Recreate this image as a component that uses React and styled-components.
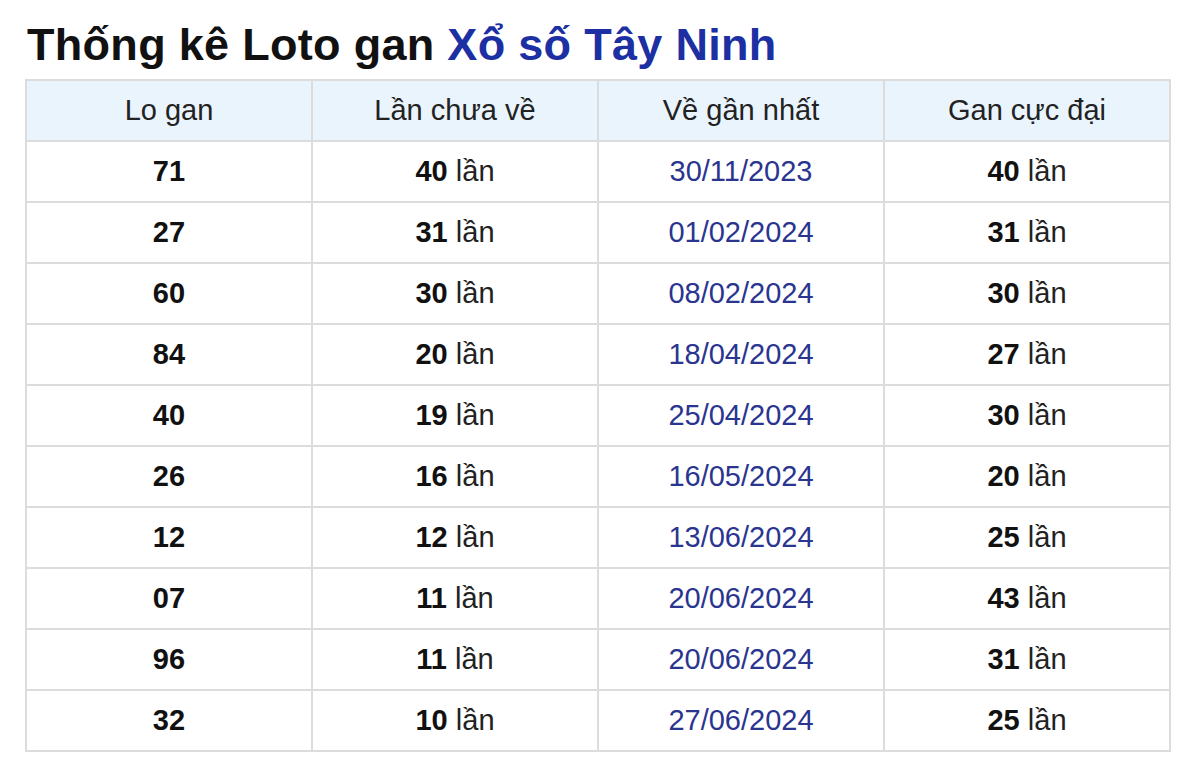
import React from "react";
import styled, { createGlobalStyle } from "styled-components";

const Global = createGlobalStyle`
  body { margin: 0; background: #fff; font-family: "Liberation Sans", Arial, sans-serif; }
`;
const Page = styled.div`padding: 18px 29px 0 25px;`;
const Title = styled.h1`
  margin: 0 0 8px 2px; font-size: 45px; font-weight: bold; color: #111; line-height: 53px;
  letter-spacing: 0.3px;
  span { color: #1c2fa3; }
`;
const Table = styled.table`
  width: 1146px; border-collapse: collapse; table-layout: fixed;
`;
const Th = styled.th`
  background: #eaf4fd; font-weight: normal; font-size: 29px; color: #222;
  height: 59px; padding: 0; border: 2px solid #dcdcdc; text-align: center;
`;
const Td = styled.td`
  height: 59px; padding: 0; border: 2px solid #dcdcdc; text-align: center; font-size: 29px;
  color: ${p => (p.$date ? "#2a3590" : "#222")};
  b { font-weight: bold; color: #111; }
`;

const rows = [
  ["71","40","30/11/2023","40"],["27","31","01/02/2024","31"],["60","30","08/02/2024","30"],
  ["84","20","18/04/2024","27"],["40","19","25/04/2024","30"],["26","16","16/05/2024","20"],
  ["12","12","13/06/2024","25"],["07","11","20/06/2024","43"],["96","11","20/06/2024","31"],
  ["32","10","27/06/2024","25"],
];

export default function App() {
  return (
    <Page>
      <Global />
      <Title>Thống kê Loto gan <span>Xổ số Tây Ninh</span></Title>
      <Table>
        <thead><tr><Th>Lo gan</Th><Th>Lần chưa về</Th><Th>Về gần nhất</Th><Th>Gan cực đại</Th></tr></thead>
        <tbody>
          {rows.map((r, i) => (
            <tr key={i}>
              <Td><b>{r[0]}</b></Td>
              <Td><b>{r[1]}</b> lần</Td>
              <Td $date>{r[2]}</Td>
              <Td><b>{r[3]}</b> lần</Td>
            </tr>
          ))}
        </tbody>
      </Table>
    </Page>
  );
}
